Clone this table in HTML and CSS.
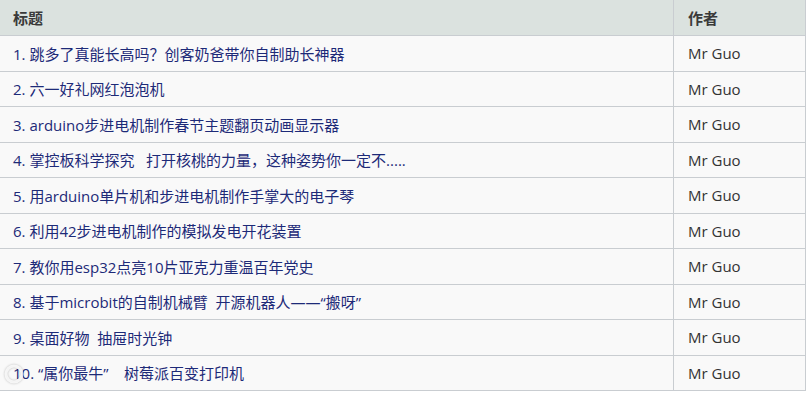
FILE: index.html
```html
<!DOCTYPE html>
<html lang="zh">
<head>
<meta charset="utf-8">
<link rel="stylesheet" href="styles.css">
</head>
<body>
<table class="list">
  <thead>
    <tr><th class="c-title">标题</th><th class="c-author">作者</th></tr>
  </thead>
  <tbody>
    <tr><td class="t">1. 跳多了真能长高吗？创客奶爸带你自制助长神器</td><td class="a">Mr Guo</td></tr>
    <tr><td class="t">2. 六一好礼网红泡泡机</td><td class="a">Mr Guo</td></tr>
    <tr><td class="t">3. arduino步进电机制作春节主题翻页动画显示器</td><td class="a">Mr Guo</td></tr>
    <tr><td class="t">4. 掌控板科学探究&nbsp;&nbsp;&nbsp;打开核桃的力量，这种姿势你一定不.....</td><td class="a">Mr Guo</td></tr>
    <tr><td class="t">5. 用arduino单片机和步进电机制作手掌大的电子琴</td><td class="a">Mr Guo</td></tr>
    <tr><td class="t">6. 利用42步进电机制作的模拟发电开花装置</td><td class="a">Mr Guo</td></tr>
    <tr><td class="t">7. 教你用esp32点亮10片亚克力重温百年党史</td><td class="a">Mr Guo</td></tr>
    <tr><td class="t">8. 基于microbit的自制机械臂&nbsp;&nbsp;开源机器人——“搬呀”</td><td class="a">Mr Guo</td></tr>
    <tr><td class="t">9. 桌面好物&nbsp;&nbsp;抽屉时光钟</td><td class="a">Mr Guo</td></tr>
    <tr><td class="t last"><svg class="wm" width="22" height="22" viewBox="0 0 22 22"><circle cx="11" cy="11" r="8" fill="none" stroke="rgba(255,255,255,0.8)" stroke-width="3"/></svg>10. “属你最牛”&nbsp;&nbsp;&nbsp;&nbsp;树莓派百变打印机</td><td class="a">Mr Guo</td></tr>
  </tbody>
</table>
</body>
</html>
```

FILE: styles.css
```css
html, body {
  margin: 0;
  padding: 0;
  background: #ffffff;
}

.list {
  border-collapse: collapse;
  width: 806px;
  margin-left: -1px;
  table-layout: fixed;
  font-family: "Open Sans", "Noto Sans CJK SC", sans-serif;
  font-size: 15px;
}

.list th,
.list td {
  border: 1px solid #c9cdd1;
  height: 35.5px;
  padding: 0 0 0 13px;
  text-align: left;
  vertical-align: middle;
  box-sizing: border-box;
  white-space: nowrap;
}

.list thead th {
  border-top: none;
  background: #dbe2df;
  color: #3a3a3a;
  font-weight: bold;
  font-family: "Noto Sans CJK SC", sans-serif;
  font-size: 15px;
}

.c-title { width: 674px; }
.c-author { width: 132px; padding-left: 14px !important; }

.list tbody td {
  background: #f9f9f9;
}

.t {
  color: #1d2a78;
  font-family: "Open Sans", "Noto Sans CJK SC", sans-serif;
}

.a {
  color: #333333;
  padding-left: 14px !important;
}

.last {
  position: relative;
}

.wm {
  position: absolute;
  left: 3px;
  top: 7px;
  filter: drop-shadow(0 0 1px rgba(0, 0, 0, 0.3));
}
```
